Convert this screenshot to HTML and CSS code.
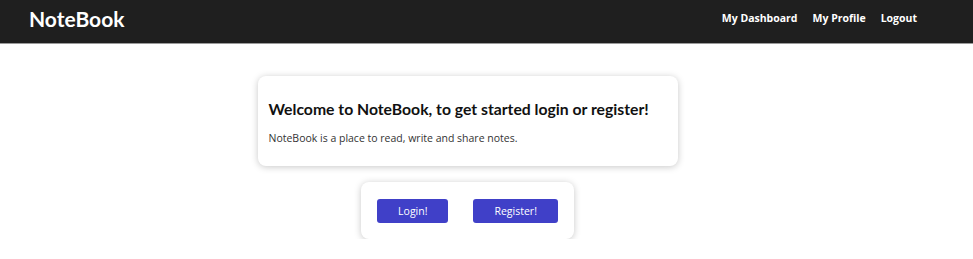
FILE: index.html
```html
<!DOCTYPE html>
<html lang="en">
<head>
<meta charset="utf-8">
<title>NoteBook</title>
<link rel="stylesheet" href="styles.css">
</head>
<body>
<header class="topbar">
  <div class="logo">NoteBook</div>
  <nav class="nav">
    <a href="#">My Dashboard</a>
    <a href="#">My Profile</a>
    <a href="#">Logout</a>
  </nav>
</header>
<main class="main">
  <section class="card welcome">
    <h2 class="title">Welcome to NoteBook, to get started login or register!</h2>
    <p class="lead">NoteBook is a place to read, write and share notes.</p>
  </section>
  <section class="card actions">
    <button class="btn">Login!</button>
    <button class="btn">Register!</button>
  </section>
</main>
</body>
</html>
```
FILE: styles.css
```css
html, body {
  margin: 0;
  padding: 0;
  background: #ffffff;
}
body {
  font-family: "Open Sans", "Noto Sans", sans-serif;
  color: #222;
}
.topbar {
  height: 43px;
  background: #1f1f1f;
  border-bottom: 1px solid #9a9a9a;
  display: flex;
  align-items: center;
  justify-content: space-between;
  padding: 0 56px 0 29px;
}
.logo {
  font-family: Lato, sans-serif;
  font-weight: 700;
  font-size: 21px;
  color: #ffffff;
  margin-top: -6px;
}
.nav {
  display: flex;
  gap: 15px;
  margin-top: -7px;
}
.nav a {
  color: #ffffff;
  text-decoration: none;
  font-weight: 700;
  font-size: 10.5px;
}
.main {
  display: flex;
  flex-direction: column;
  align-items: center;
  padding: 32px 38px 0 0;
  gap: 16px;
}
.card {
  background: #ffffff;
  border-radius: 8px;
  box-shadow: 0 1px 7px rgba(0, 0, 0, 0.22);
}
.welcome {
  width: 420px;
  box-sizing: border-box;
  height: 90px;
  padding: 23px 11px 0;
}
.title {
  font-family: Lato, sans-serif;
  font-weight: 700;
  font-size: 15.75px;
  line-height: 20px;
  margin: 0 0 11px;
  color: #111;
  white-space: nowrap;
}
.lead {
  margin: 0;
  font-size: 10.5px;
  line-height: 16px;
  color: #333;
}
.actions {
  display: flex;
  gap: 25px;
  padding: 17px 16px 16px;
}
.btn {
  height: 24px;
  padding: 0 21px;
  border: none;
  border-radius: 3px;
  background: #4040c8;
  color: #ffffff;
  font-family: "Open Sans", "Noto Sans", sans-serif;
  font-size: 10.5px;
  cursor: pointer;
}
```
